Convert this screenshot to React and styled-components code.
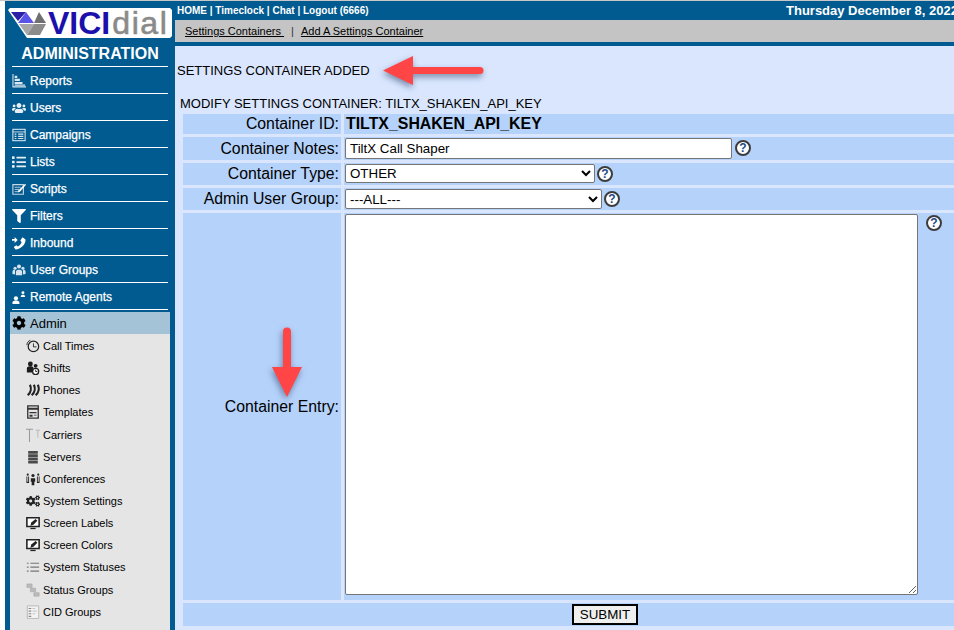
import React from "react";
import styled, { createGlobalStyle } from "styled-components";
import { FaUsers, FaList, FaFilter, FaCog, FaCogs } from "react-icons/fa";

const GlobalStyle = createGlobalStyle`
    html, body {
        margin: 0;
        padding: 0;
        height: 100%;
        overflow: hidden;
        background: #ffffff;
        font-family: "Liberation Sans", Arial, sans-serif;
    }
`;

const Page = styled.div`
    display: flex;
    width: 954px;
    height: 630px;
    padding-left: 5px;
    box-sizing: border-box;
    border-top: 1px solid #c8c8c8;
    overflow: hidden;
`;

const Sidebar = styled.div`
    width: 170px;
    flex: none;
    background: #015b91;
    padding-top: 7px;
`;

const Logo = styled.div`
    display: flex;
    align-items: center;
    height: 30px;
    margin: 0 3px;
    background: #ffffff;
    clip-path: polygon(0 2px, 2px 0, 162px 0, 164px 2px, 164px 28px, 162px 30px, 19px 30px);
`;

const LogoMark = styled.svg`
    width: 40px;
    height: 30px;
    flex: none;
`;

const LogoVici = styled.span`
    font-size: 32px;
    font-weight: bold;
    color: #1c10ad;
    line-height: 30px;
`;

const LogoDial = styled.span`
    font-size: 32px;
    color: #8a8a8a;
    line-height: 30px;
    letter-spacing: 1.6px;
    margin-left: 2px;
    -webkit-text-stroke: 0.6px #8a8a8a;
`;

const SideTitle = styled.div`
    height: 29px;
    margin: 0 7px;
    box-sizing: border-box;
    border-bottom: 1px solid #ffffff;
    color: #ffffff;
    font-size: 16px;
    font-weight: bold;
    text-align: center;
    line-height: 32px;
    white-space: nowrap;
`;

const NavRow = styled.div`
    display: flex;
    align-items: center;
    height: 27px;
    margin: 0 7px;
    padding-top: 2px;
    box-sizing: border-box;
    border-bottom: 1px solid #ffffff;
    color: #ffffff;
    font-size: 12px;
    -webkit-text-stroke: 0.25px #ffffff;
    svg {
        width: 14px;
        height: 14px;
        margin-right: 4px;
        flex: none;
    }
`;

const AdminRow = styled.div`
    display: flex;
    align-items: center;
    height: 22px;
    margin: 2px 5px 0;
    padding-left: 2px;
    background: #a4c3d7;
    color: #000000;
    font-size: 13px;
    svg {
        width: 14px;
        height: 14px;
        margin-right: 4px;
        flex: none;
    }
`;

const SubList = styled.div`
    margin: 0 5px;
    padding-top: 1px;
    background: #e5e5e5;
    height: 400px;
`;

const SubRow = styled.div`
    display: flex;
    align-items: center;
    height: 22.15px;
    padding-left: 16px;
    color: #000000;
    font-size: 11px;
    svg {
        width: 14px;
        height: 14px;
        margin-right: 3px;
        flex: none;
    }
`;

const Main = styled.div`
    position: relative;
    flex: 1;
    min-width: 0;
    background: #d9e6fe;
`;

const TopBar = styled.div`
    display: flex;
    height: 19px;
    align-items: center;
    padding-left: 2px;
    background: #015b91;
    color: #ffffff;
    font-weight: bold;
    white-space: nowrap;
`;

const TopLinks = styled.div`
    width: 609px;
    flex: none;
    font-size: 10px;
    margin-top: -1px;
`;

const TopDate = styled.div`
    font-size: 13px;
`;

const SubBar = styled.div`
    display: flex;
    align-items: center;
    height: 22px;
    padding-left: 10px;
    border-bottom: 4px solid #015b91;
    background: #c4c4c4;
    font-size: 11px;
    color: #000000;
    white-space: pre;
`;

const SubLink = styled.a`
    color: #000000;
    text-decoration: underline;
`;

const SubSep = styled.span`
    margin: 0 7px;
    color: #333333;
`;

const Notice = styled.div`
    margin: 18px 0 0 2px;
    height: 14px;
    font-size: 13px;
    line-height: 14px;
    color: #000000;
`;

const FormTitle = styled.div`
    margin: 19px 0 0 5px;
    height: 14px;
    font-size: 13px;
    line-height: 14px;
    color: #000000;
`;

const FormGrid = styled.div`
    display: grid;
    grid-template-columns: 158px 1fr;
    grid-template-rows: 20px 23px 22px 22px 387px 23px;
    gap: 3px;
    margin: 3px 0 0 8px;
`;

const LabelCell = styled.div`
    display: flex;
    align-items: center;
    justify-content: flex-end;
    padding-right: 2px;
    background: #b5d2fa;
    font-size: 15.8px;
    color: #000000;
    white-space: nowrap;
`;

const ValueCell = styled.div`
    display: flex;
    align-items: ${(props) => (props.$top ? "flex-start" : "center")};
    padding: ${(props) => (props.$top ? "1px" : "0")} 0 0 ${(props) => (props.$bold ? "2px" : "1px")};
    background: #b5d2fa;
    font-size: 15.9px;
    font-weight: ${(props) => (props.$bold ? "bold" : "normal")};
    color: #000000;
`;

const SubmitCell = styled.div`
    grid-column: 1 / 3;
    display: flex;
    align-items: center;
    justify-content: center;
    padding-left: 73px;
    background: #b5d2fa;
`;

const TextInput = styled.input`
    width: ${(props) => props.$width}px;
    height: 21px;
    box-sizing: border-box;
    padding: 1px 4px;
    border: 1px solid #767676;
    border-radius: 2px;
    background: #ffffff;
    font-family: "Liberation Sans", Arial, sans-serif;
    font-size: 13.33px;
    color: #000000;
`;

const Picker = styled.select`
    width: ${(props) => props.$width}px;
    height: ${(props) => props.$height}px;
    margin-bottom: ${(props) => 20 - props.$height}px;
    box-sizing: border-box;
    border: 1px solid #767676;
    border-radius: 2px;
    background: #ffffff;
    font-family: "Liberation Sans", Arial, sans-serif;
    font-size: 13.33px;
    color: #000000;
`;

const EntryBox = styled.textarea`
    width: 573px;
    height: 381px;
    box-sizing: border-box;
    border: 1px solid #767676;
    border-radius: 2px;
    background: #ffffff;
`;

const Help = styled.span`
    flex: none;
    width: 16px;
    height: 16px;
    margin-left: ${(props) => props.$gap || 2}px;
    margin-top: ${(props) => props.$top || 0}px;
    box-sizing: border-box;
    border: 2px solid #3c3c3c;
    border-radius: 50%;
    background: #ffffff;
    color: #214a86;
    font-size: 12px;
    font-weight: bold;
    line-height: 12px;
    text-align: center;
`;

const SubmitButton = styled.button`
    width: 66px;
    height: 21px;
    padding: 0;
    box-sizing: border-box;
    border: 2px solid #000000;
    background: #efefef;
    font-family: "Liberation Sans", Arial, sans-serif;
    font-size: 13.33px;
    color: #000000;
`;

const Arrow = styled.svg`
    position: absolute;
    left: ${(props) => props.$left}px;
    top: ${(props) => props.$top}px;
    overflow: visible;
    filter: drop-shadow(-1px 3px 3px rgba(40, 60, 100, 0.55));
`;

const ReportsIcon = () => (
    <svg viewBox="0 0 16 16" fill="#dce8f0">
        <path d="M0.500 0h1.200v14H16v1.300H0.500z" />
        <path d="M3 2h3v2.500H3zM3 5.500h6V8H3zM3 9h9v2.500H3zM3 12h12v1.500H3z" />
    </svg>
);

const CampaignsIcon = () => (
    <svg viewBox="0 0 16 16" fill="none" stroke="#dce8f0">
        <rect x="1" y="1.500" width="14" height="13" strokeWidth="1.200" />
        <path d="M1 4.500h14" />
        <path d="M3 7h2M3 9.500h2M3 12h2M7 7h6M7 9.500h6M7 12h6" strokeWidth="1.400" />
    </svg>
);

const ScriptsIcon = () => (
    <svg viewBox="0 0 16 16">
        <path d="M1 3h12v11H1z" fill="none" stroke="#c7d6e2" strokeWidth="1.300" />
        <path d="M3 6h7M3 8.500h5M3 11h4" stroke="#c7d6e2" />
        <path d="M15 2l1 1.200-7 7.800-2.500 1 1-2.500z" fill="#ffffff" />
    </svg>
);

const InboundIcon = () => (
    <svg viewBox="0 0 16 16" fill="#ffffff">
        <path d="M12 1.500l3.500 2.500C15.500 10 10 15 4 15.500L2 12.500l3-2 1.500 1.500c2.200-1 3.800-3 4.500-5L9.500 5z" />
        <path d="M0 3.500h3V1l3.500 3.500L3 8V5.500H0z" />
    </svg>
);

const GroupsIcon = () => (
    <svg viewBox="0 0 16 16" fill="#d8e4ee">
        <circle cx="8" cy="4" r="2.300" />
        <circle cx="3.500" cy="6" r="1.800" />
        <circle cx="12.500" cy="6" r="1.800" />
        <path d="M4.500 14v-4c0-3 7-3 7 0v4z" />
        <path d="M0.500 12.500V10c0-2 2-2.500 3-2v5zM15.500 12.500V10c0-2-2-2.500-3-2v5z" />
    </svg>
);

const AgentsIcon = () => (
    <svg viewBox="0 0 16 16" fill="#ffffff">
        <circle cx="4.500" cy="9.500" r="2.400" />
        <path d="M0.500 16v-1.500c0-2 2.200-2.500 4-2.500s4 .5 4 2.500V16z" />
        <circle cx="12.500" cy="3" r="1.700" />
        <path d="M10 8c0-2 1.200-2.500 2.500-2.500S15 6 15 8z" />
    </svg>
);

const ClockIcon = () => (
    <svg viewBox="0 0 16 16" fill="none" stroke="#222222">
        <circle cx="8.500" cy="8.500" r="6" strokeWidth="1.400" />
        <path d="M8.500 5v4h3.500" />
        <path d="M1 7c0-3 2-5 4-5.500" />
    </svg>
);

const ShiftsIcon = () => (
    <svg viewBox="0 0 16 16" fill="#1c1c1c">
        <circle cx="5" cy="3.500" r="2.800" />
        <path d="M1 13V8.500c0-2 2-2.500 4-2.500 1.500 0 3 .3 3.500 1.500L7 13z" />
        <circle cx="11" cy="5.500" r="2.200" />
        <circle cx="11" cy="12" r="3.500" fill="#ffffff" stroke="#1c1c1c" strokeWidth="1.500" />
        <path d="M11 10v2h2" fill="none" stroke="#1c1c1c" />
    </svg>
);

const PhonesIcon = () => (
    <svg viewBox="0 0 16 16" fill="none" stroke="#222222" strokeWidth="2.500">
        <path d="M4.500 2c2 4 1 9-2.500 12" />
        <path d="M9 2c2 4 1 9-2.500 12" />
        <path d="M13.500 2c2 4 1 9-2.500 12" />
    </svg>
);

const TemplatesIcon = () => (
    <svg viewBox="0 0 16 16">
        <path d="M2 1h12v14H2z" fill="none" stroke="#333333" strokeWidth="1.500" />
        <path d="M2 3h12v2.500H2zM4 8h8v1.500H4zM4 11h3.500v2.500H4zM9 11h3v1H9z" fill="#333333" />
    </svg>
);

const CarriersIcon = () => (
    <svg viewBox="0 0 16 16" fill="none" stroke="#9a9a9a">
        <path d="M0 1.500h8M4 1.500V16" strokeWidth="1.200" />
        <path d="M11 2.500h5M13.500 2.500V11" stroke="#bcbcbc" strokeWidth="1.200" />
    </svg>
);

const ServersIcon = () => (
    <svg viewBox="0 0 16 16" fill="#4a4a4a">
        <path d="M2.500 1h11v3.200h-11zM2.500 4.800h11V8h-11zM2.500 8.600h11v3.200h-11zM2.500 12.400h11V15.500h-11z" />
    </svg>
);

const ConferencesIcon = () => (
    <svg viewBox="0 0 16 16" fill="#222222">
        <circle cx="8" cy="4" r="1.800" />
        <path d="M5.500 7h5v4H9.500v4h-3v-4h-1z" />
        <circle cx="2" cy="3" r="1.200" />
        <path d="M.5 5h1v6h1V5h1v7.500h-3z" />
        <circle cx="14" cy="3" r="1.200" />
        <path d="M12.500 5h1v6h1V5h1v7.500h-3z" />
    </svg>
);

const ScreenIcon = () => (
    <svg viewBox="0 0 16 16">
        <path d="M1 2h14v10H1z" fill="#ffffff" stroke="#222222" strokeWidth="1.800" />
        <path d="M5 13.500h6V15H5z" fill="#222222" />
        <path d="M11 3.500l2 2L8.500 10 5 11l1-3.500z" fill="#222222" />
    </svg>
);

const StatusesIcon = () => (
    <svg viewBox="0 0 16 16" fill="#777777">
        <path d="M1 3h2v1.300H1zM5 3h10v1.300H5zM1 7.500h2v1.300H1zM5 7.500h10v1.300H5zM1 12h2v1.300H1zM5 12h10v1.300H5z" />
    </svg>
);

const StatusGroupsIcon = () => (
    <svg viewBox="0 0 16 16" fill="#bbbbbb" stroke="#999999" strokeWidth="0.500">
        <path d="M1 1h6v4H1zM5 6h6v4H5zM9 11h6v4H9z" />
    </svg>
);

const CidGroupsIcon = () => (
    <svg viewBox="0 0 16 16" fill="none" stroke="#888888">
        <path d="M1.500 1h13v14.500h-13z" fill="#f2f2f2" stroke="#b5b5b5" />
        <path d="M3 4h3M3 7h3M3 10h3M3 13h3" strokeWidth="1.400" />
        <path d="M7.500 4h3M7.500 7h5M7.500 10h3" stroke="#bbbbbb" />
    </svg>
);

const navItems = [
    { label: "Reports", icon: <ReportsIcon /> },
    { label: "Users", icon: <FaUsers color="#e6eef4" /> },
    { label: "Campaigns", icon: <CampaignsIcon /> },
    { label: "Lists", icon: <FaList color="#e6eef4" /> },
    { label: "Scripts", icon: <ScriptsIcon /> },
    { label: "Filters", icon: <FaFilter color="#ffffff" /> },
    { label: "Inbound", icon: <InboundIcon /> },
    { label: "User Groups", icon: <GroupsIcon /> },
    { label: "Remote Agents", icon: <AgentsIcon /> },
];

const adminItems = [
    { label: "Call Times", icon: <ClockIcon /> },
    { label: "Shifts", icon: <ShiftsIcon /> },
    { label: "Phones", icon: <PhonesIcon /> },
    { label: "Templates", icon: <TemplatesIcon /> },
    { label: "Carriers", icon: <CarriersIcon /> },
    { label: "Servers", icon: <ServersIcon /> },
    { label: "Conferences", icon: <ConferencesIcon /> },
    { label: "System Settings", icon: <FaCogs color="#222222" /> },
    { label: "Screen Labels", icon: <ScreenIcon /> },
    { label: "Screen Colors", icon: <ScreenIcon /> },
    { label: "System Statuses", icon: <StatusesIcon /> },
    { label: "Status Groups", icon: <StatusGroupsIcon /> },
    { label: "CID Groups", icon: <CidGroupsIcon /> },
];

const App = () => {
    return (
        <Page>
            <GlobalStyle />
            <Sidebar>
                <Logo>
                    <LogoMark viewBox="0 0 40 30">
                        <path d="M3 4h15l-8 9z" fill="#2c1fa8" />
                        <path d="M18 4l8 11H10z" fill="#5a55e8" />
                        <path d="M31 4l-5 11h12z" fill="#6f6f6f" />
                        <path d="M11 16h15l-7 11z" fill="#a8a8a8" />
                        <path d="M26 16h12l-6 11h-6l-7 0z" fill="#8c8c8c" />
                    </LogoMark>
                    <LogoVici>VICI</LogoVici>
                    <LogoDial>dial</LogoDial>
                </Logo>
                <SideTitle>ADMINISTRATION</SideTitle>
                {navItems.map((item) => (
                    <NavRow key={item.label}>
                        {item.icon}
                        {item.label}
                    </NavRow>
                ))}
                <AdminRow>
                    <FaCog />
                    Admin
                </AdminRow>
                <SubList>
                    {adminItems.map((item) => (
                        <SubRow key={item.label}>
                            {item.icon}
                            {item.label}
                        </SubRow>
                    ))}
                </SubList>
            </Sidebar>
            <Main>
                <TopBar>
                    <TopLinks>HOME | Timeclock | Chat | Logout (6666)</TopLinks>
                    <TopDate>Thursday December 8, 2022</TopDate>
                </TopBar>
                <SubBar>
                    <SubLink>Settings Containers </SubLink>
                    <SubSep>|</SubSep>
                    <SubLink>Add A Settings Container</SubLink>
                </SubBar>
                <Notice>SETTINGS CONTAINER ADDED</Notice>
                <FormTitle>MODIFY SETTINGS CONTAINER: TILTX_SHAKEN_API_KEY</FormTitle>
                <FormGrid>
                    <LabelCell>Container ID:</LabelCell>
                    <ValueCell $bold>TILTX_SHAKEN_API_KEY</ValueCell>

                    <LabelCell>Container Notes:</LabelCell>
                    <ValueCell>
                        <TextInput $width={387} defaultValue="TiltX Call Shaper" />
                        <Help $gap={3} $top={-2}>?</Help>
                    </ValueCell>

                    <LabelCell>Container Type:</LabelCell>
                    <ValueCell>
                        <Picker $width={250} $height={19} defaultValue="OTHER">
                            <option>OTHER</option>
                        </Picker>
                        <Help>?</Help>
                    </ValueCell>

                    <LabelCell>Admin User Group:</LabelCell>
                    <ValueCell>
                        <Picker $width={257} $height={20} defaultValue="---ALL---">
                            <option>---ALL---</option>
                        </Picker>
                        <Help>?</Help>
                    </ValueCell>

                    <LabelCell>Container Entry:</LabelCell>
                    <ValueCell $top>
                        <EntryBox />
                        <Help $gap={8} $top={1}>?</Help>
                    </ValueCell>

                    <SubmitCell>
                        <SubmitButton>SUBMIT</SubmitButton>
                    </SubmitCell>
                </FormGrid>
                <Arrow $left={208} $top={54} width="102" height="32" viewBox="0 0 102 32">
                    <path d="M0 15.500L30 1v11h67a3.500 3.500 0 0 1 0 7H30v11z" fill="#ff4545" />
                </Arrow>
                <Arrow $left={97} $top={326} width="30" height="70" viewBox="0 0 30 70">
                    <path d="M15 70L0 40h11V4.500a4 4 0 0 1 8 0V40h11z" fill="#ff4545" />
                </Arrow>
            </Main>
        </Page>
    );
};

export default App;
